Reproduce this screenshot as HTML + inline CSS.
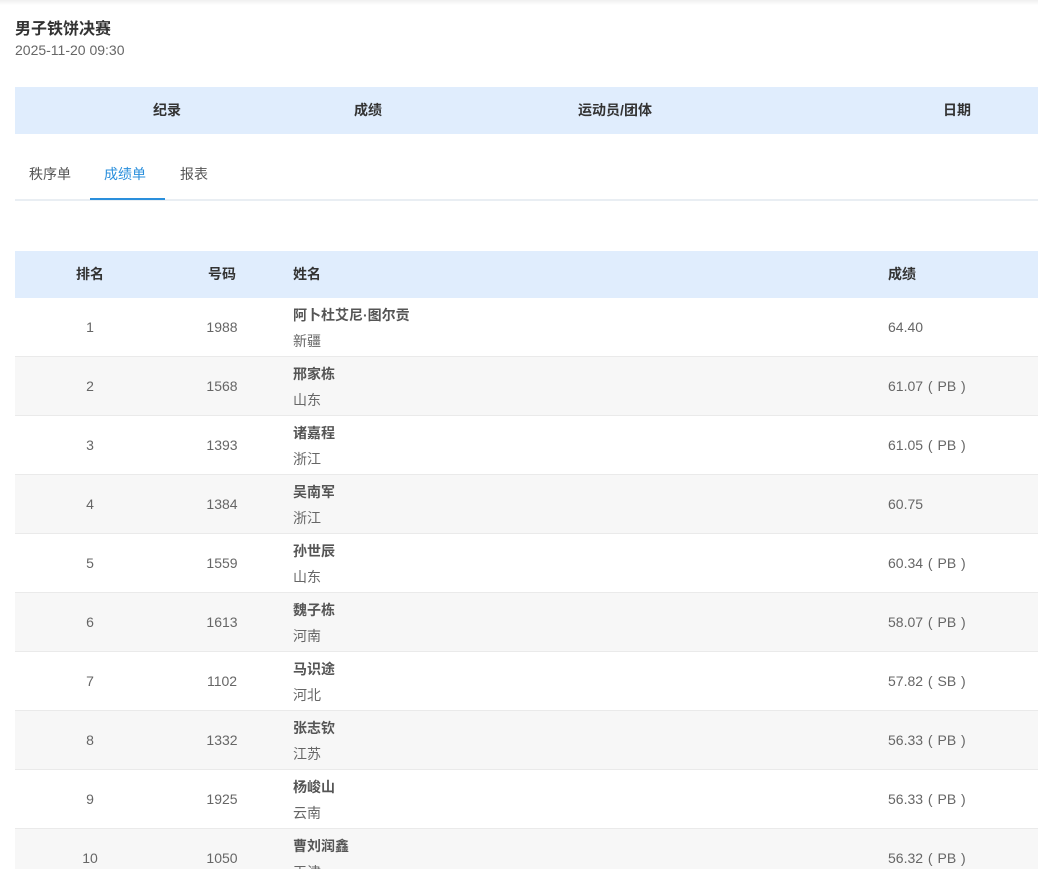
<!DOCTYPE html>
<html><head><meta charset="utf-8"><style>
html,body{margin:0;width:1038px;height:869px;overflow:hidden;background:#fff;font-family:"Liberation Sans","Noto Sans CJK SC",sans-serif;position:relative}
.shadow{position:absolute;left:0;top:0;width:1038px;height:5px;background:linear-gradient(#f0f0f0,#fff)}
.t{position:absolute;left:15px;top:15px;font-size:16px;color:#333;font-weight:bold}
.d{position:absolute;left:15px;top:42px;font-size:14px;color:#666}
.bar{position:absolute;left:15px;top:87px;width:1023px;height:47px;background:#e0edfd}
.bar span,.th span{position:absolute;top:0;line-height:47px;font-size:14px;font-weight:bold;color:#333;transform:translateX(-50%)}
.tabs{position:absolute;left:15px;top:152px;width:1023px;height:47px;border-bottom:2px solid #e9eef3}
.tab{position:absolute;top:12px;font-size:14px;color:#555}
.ul{position:absolute;left:75px;top:46px;width:75px;height:2px;background:#2a8fdc}
.th{position:absolute;left:15px;top:251px;width:1023px;height:47px;background:#e0edfd}
.row{position:absolute;left:15px;width:1023px;height:58px;border-bottom:1px solid #eaeaea;font-size:14px;color:#666}
.row.g{background:#f7f7f7}
.c{position:absolute;top:0;line-height:58px;transform:translateX(-50%)}
.n{position:absolute;left:278px;top:7px;font-weight:bold;color:#555}
.tm{position:absolute;left:278px;top:33px}
.s{position:absolute;left:873px;top:0;line-height:58px;word-spacing:1px}
</style></head><body>
<div class="shadow"></div>
<div class="t">男子铁饼决赛</div>
<div class="d">2025-11-20 09:30</div>
<div class="bar"><span style="left:152px">纪录</span><span style="left:353px">成绩</span><span style="left:600px">运动员/团体</span><span style="left:942px">日期</span></div>
<div class="tabs"><span class="tab" style="left:14px">秩序单</span><span class="tab" style="left:89px;color:#2a8fdc">成绩单</span><span class="tab" style="left:165px">报表</span><div class="ul"></div></div>
<div class="th"><span style="left:75px">排名</span><span style="left:207px">号码</span><span style="left:278px;transform:none">姓名</span><span style="left:873px;transform:none">成绩</span></div>
<div class="row" style="top:298px"><span class="c" style="left:75px">1</span><span class="c" style="left:207px">1988</span><span class="n">阿卜杜艾尼·图尔贡</span><span class="tm">新疆</span><span class="s">64.40</span></div>
<div class="row g" style="top:357px"><span class="c" style="left:75px">2</span><span class="c" style="left:207px">1568</span><span class="n">邢家栋</span><span class="tm">山东</span><span class="s">61.07 ( PB )</span></div>
<div class="row" style="top:416px"><span class="c" style="left:75px">3</span><span class="c" style="left:207px">1393</span><span class="n">诸嘉程</span><span class="tm">浙江</span><span class="s">61.05 ( PB )</span></div>
<div class="row g" style="top:475px"><span class="c" style="left:75px">4</span><span class="c" style="left:207px">1384</span><span class="n">吴南军</span><span class="tm">浙江</span><span class="s">60.75</span></div>
<div class="row" style="top:534px"><span class="c" style="left:75px">5</span><span class="c" style="left:207px">1559</span><span class="n">孙世辰</span><span class="tm">山东</span><span class="s">60.34 ( PB )</span></div>
<div class="row g" style="top:593px"><span class="c" style="left:75px">6</span><span class="c" style="left:207px">1613</span><span class="n">魏子栋</span><span class="tm">河南</span><span class="s">58.07 ( PB )</span></div>
<div class="row" style="top:652px"><span class="c" style="left:75px">7</span><span class="c" style="left:207px">1102</span><span class="n">马识途</span><span class="tm">河北</span><span class="s">57.82 ( SB )</span></div>
<div class="row g" style="top:711px"><span class="c" style="left:75px">8</span><span class="c" style="left:207px">1332</span><span class="n">张志钦</span><span class="tm">江苏</span><span class="s">56.33 ( PB )</span></div>
<div class="row" style="top:770px"><span class="c" style="left:75px">9</span><span class="c" style="left:207px">1925</span><span class="n">杨峻山</span><span class="tm">云南</span><span class="s">56.33 ( PB )</span></div>
<div class="row g" style="top:829px"><span class="c" style="left:75px">10</span><span class="c" style="left:207px">1050</span><span class="n">曹刘润鑫</span><span class="tm">天津</span><span class="s">56.32 ( PB )</span></div>
</body></html>
